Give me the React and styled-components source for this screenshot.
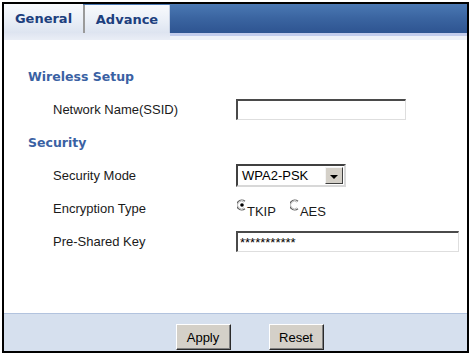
import React from "react";
import styled, { createGlobalStyle } from "styled-components";

const GlobalStyle = createGlobalStyle`
  body {
    margin: 0;
    background: #fff;
    font-family: "Liberation Sans", Arial, sans-serif;
  }
`;

const Frame = styled.div`
  box-sizing: border-box;
  width: 467px;
  height: 351px;
  margin: 2px;
  border: 2px solid #000;
  display: flex;
  flex-direction: column;
  background: #fff;
`;

const TabBar = styled.div`
  display: flex;
  height: 29px;
  background: linear-gradient(#4a78b3, #3a64a0 50%, #2e5491);
`;

const Tab = styled.div`
  box-sizing: border-box;
  width: ${(p) => p.$w}px;
  display: flex;
  align-items: center;
  justify-content: center;
  margin-top: ${(p) => (p.$active ? 0 : 1)}px;
  font: bold 13px "DejaVu Sans", Verdana, sans-serif;
  color: #1d3f7e;
  background: linear-gradient(#f8fafd, #e9eef6 60%, #dde4f0);
  border-left: ${(p) => (p.$active ? "none" : "2px solid #9a9a9a")};
  border-right: ${(p) => (p.$active ? "none" : "1px solid #c8d2e4")};
`;

const Strip = styled.div`
  display: flex;
  height: 7px;
`;

const StripPart = styled.div`
  width: ${(p) => (p.$w ? `${p.$w}px` : "auto")};
  flex: ${(p) => (p.$w ? "none" : 1)};
  background: ${(p) =>
    p.$under
      ? "linear-gradient(#c2ccec 0, #c2ccec 3px, #eef1f8 3px)"
      : "linear-gradient(#dfe5f1, #eaeef6)"};
`;

const Content = styled.div`
  flex: 1;
  padding: 26px 0 0 24px;
`;

const Heading = styled.div`
  height: 20px;
  display: flex;
  align-items: center;
  margin-top: ${(p) => p.$gap || 0}px;
  margin-bottom: 7px;
  font: bold 12.5px "DejaVu Sans", Verdana, sans-serif;
  color: #3a61a3;
`;

const Row = styled.div`
  display: flex;
  align-items: center;
  height: 33px;
  padding-left: 25px;
`;

const Label = styled.div`
  width: 183px;
  font-size: 13px;
  color: #1a1a1a;
`;

const TextBox = styled.input`
  box-sizing: border-box;
  width: ${(p) => p.$w}px;
  height: 21px;
  margin: 0;
  padding: 0 2px;
  border-style: solid;
  border-width: 2px 1px 1px 2px;
  border-color: #4a4a4a #dedede #dedede #4a4a4a;
  background: #fff;
  font: 13px "Liberation Sans", Arial, sans-serif;
  line-height: 13px;
  color: #000;
  outline: none;
`;

const SelectBox = styled.div`
  box-sizing: border-box;
  width: 110px;
  height: 23px;
  display: flex;
  align-items: center;
  justify-content: space-between;
  padding: 0 1px 0 4px;
  border-style: solid;
  border-width: 2px;
  border-color: #404040 #d8d8d8 #d8d8d8 #404040;
  font-size: 13px;
  color: #000;
  background: #fff;
`;

const ArrowButton = styled.div`
  box-sizing: border-box;
  width: 18px;
  height: 17px;
  display: flex;
  align-items: center;
  justify-content: center;
  background: #d4d0c8;
  border: 1px solid;
  border-color: #f4f4f4 #404040 #404040 #f4f4f4;

  &::after {
    content: "";
    border-top: 4px solid #000;
    border-left: 4px solid transparent;
    border-right: 4px solid transparent;
    margin-top: 2px;
  }
`;

const RadioGroup = styled.div`
  display: flex;
  gap: 14px;
  margin-left: 1px;
`;

const RadioItem = styled.label`
  display: flex;
  align-items: flex-start;
  gap: 1px;
  font-size: 13px;
  color: #1a1a1a;

  span {
    padding-top: 5px;
  }
`;

const Footer = styled.div`
  height: 38px;
  display: flex;
  align-items: flex-start;
  justify-content: center;
  gap: 38px;
  padding: 10px 0 0 28px;
  box-sizing: border-box;
  border-top: 1px solid #b2c3de;
  background: #d6e0ee;
`;

const Button = styled.button`
  box-sizing: border-box;
  width: ${(p) => p.$w}px;
  height: 26px;
  padding: 0;
  background: #d4d0c8;
  border: 1px solid;
  border-color: #fff #2a2a2a #2a2a2a #fff;
  box-shadow: inset -1px -1px #808080;
  font: 13px "Liberation Sans", Arial, sans-serif;
  color: #000;
`;

const Radio = ({ checked }) => (
  <svg width="9" height="12" viewBox="0 0 9 12">
    <path d="M8 2.2 A5 5 0 1 0 8 9.8" fill="none" stroke="#606060" strokeWidth="1.2" />
    <path d="M7 3.2 A3.8 3.8 0 1 0 7 8.8" fill="none" stroke="#b0b0b0" strokeWidth="0.8" />
    {checked && <circle cx="5" cy="6" r="1.8" fill="#000" />}
  </svg>
);

export default function App() {
  return (
    <>
      <GlobalStyle />
      <Frame>
        <TabBar>
          <Tab $w={79} $active>
            General
          </Tab>
          <Tab $w={87}>Advance</Tab>
        </TabBar>
        <Strip>
          <StripPart $w={166} />
          <StripPart $under />
        </Strip>
        <Content>
          <Heading>Wireless Setup</Heading>
          <Row>
            <Label>Network Name(SSID)</Label>
            <TextBox $w={170} defaultValue="" />
          </Row>
          <Heading $gap={6}>Security</Heading>
          <Row>
            <Label>Security Mode</Label>
            <SelectBox>
              <span>WPA2-PSK</span>
              <ArrowButton />
            </SelectBox>
          </Row>
          <Row>
            <Label>Encryption Type</Label>
            <RadioGroup>
              <RadioItem>
                <Radio checked />
                <span>TKIP</span>
              </RadioItem>
              <RadioItem>
                <Radio />
                <span>AES</span>
              </RadioItem>
            </RadioGroup>
          </Row>
          <Row>
            <Label>Pre-Shared Key</Label>
            <TextBox $w={223} defaultValue="***********" />
          </Row>
        </Content>
        <Footer>
          <Button $w={55}>Apply</Button>
          <Button $w={55}>Reset</Button>
        </Footer>
      </Frame>
    </>
  );
}
